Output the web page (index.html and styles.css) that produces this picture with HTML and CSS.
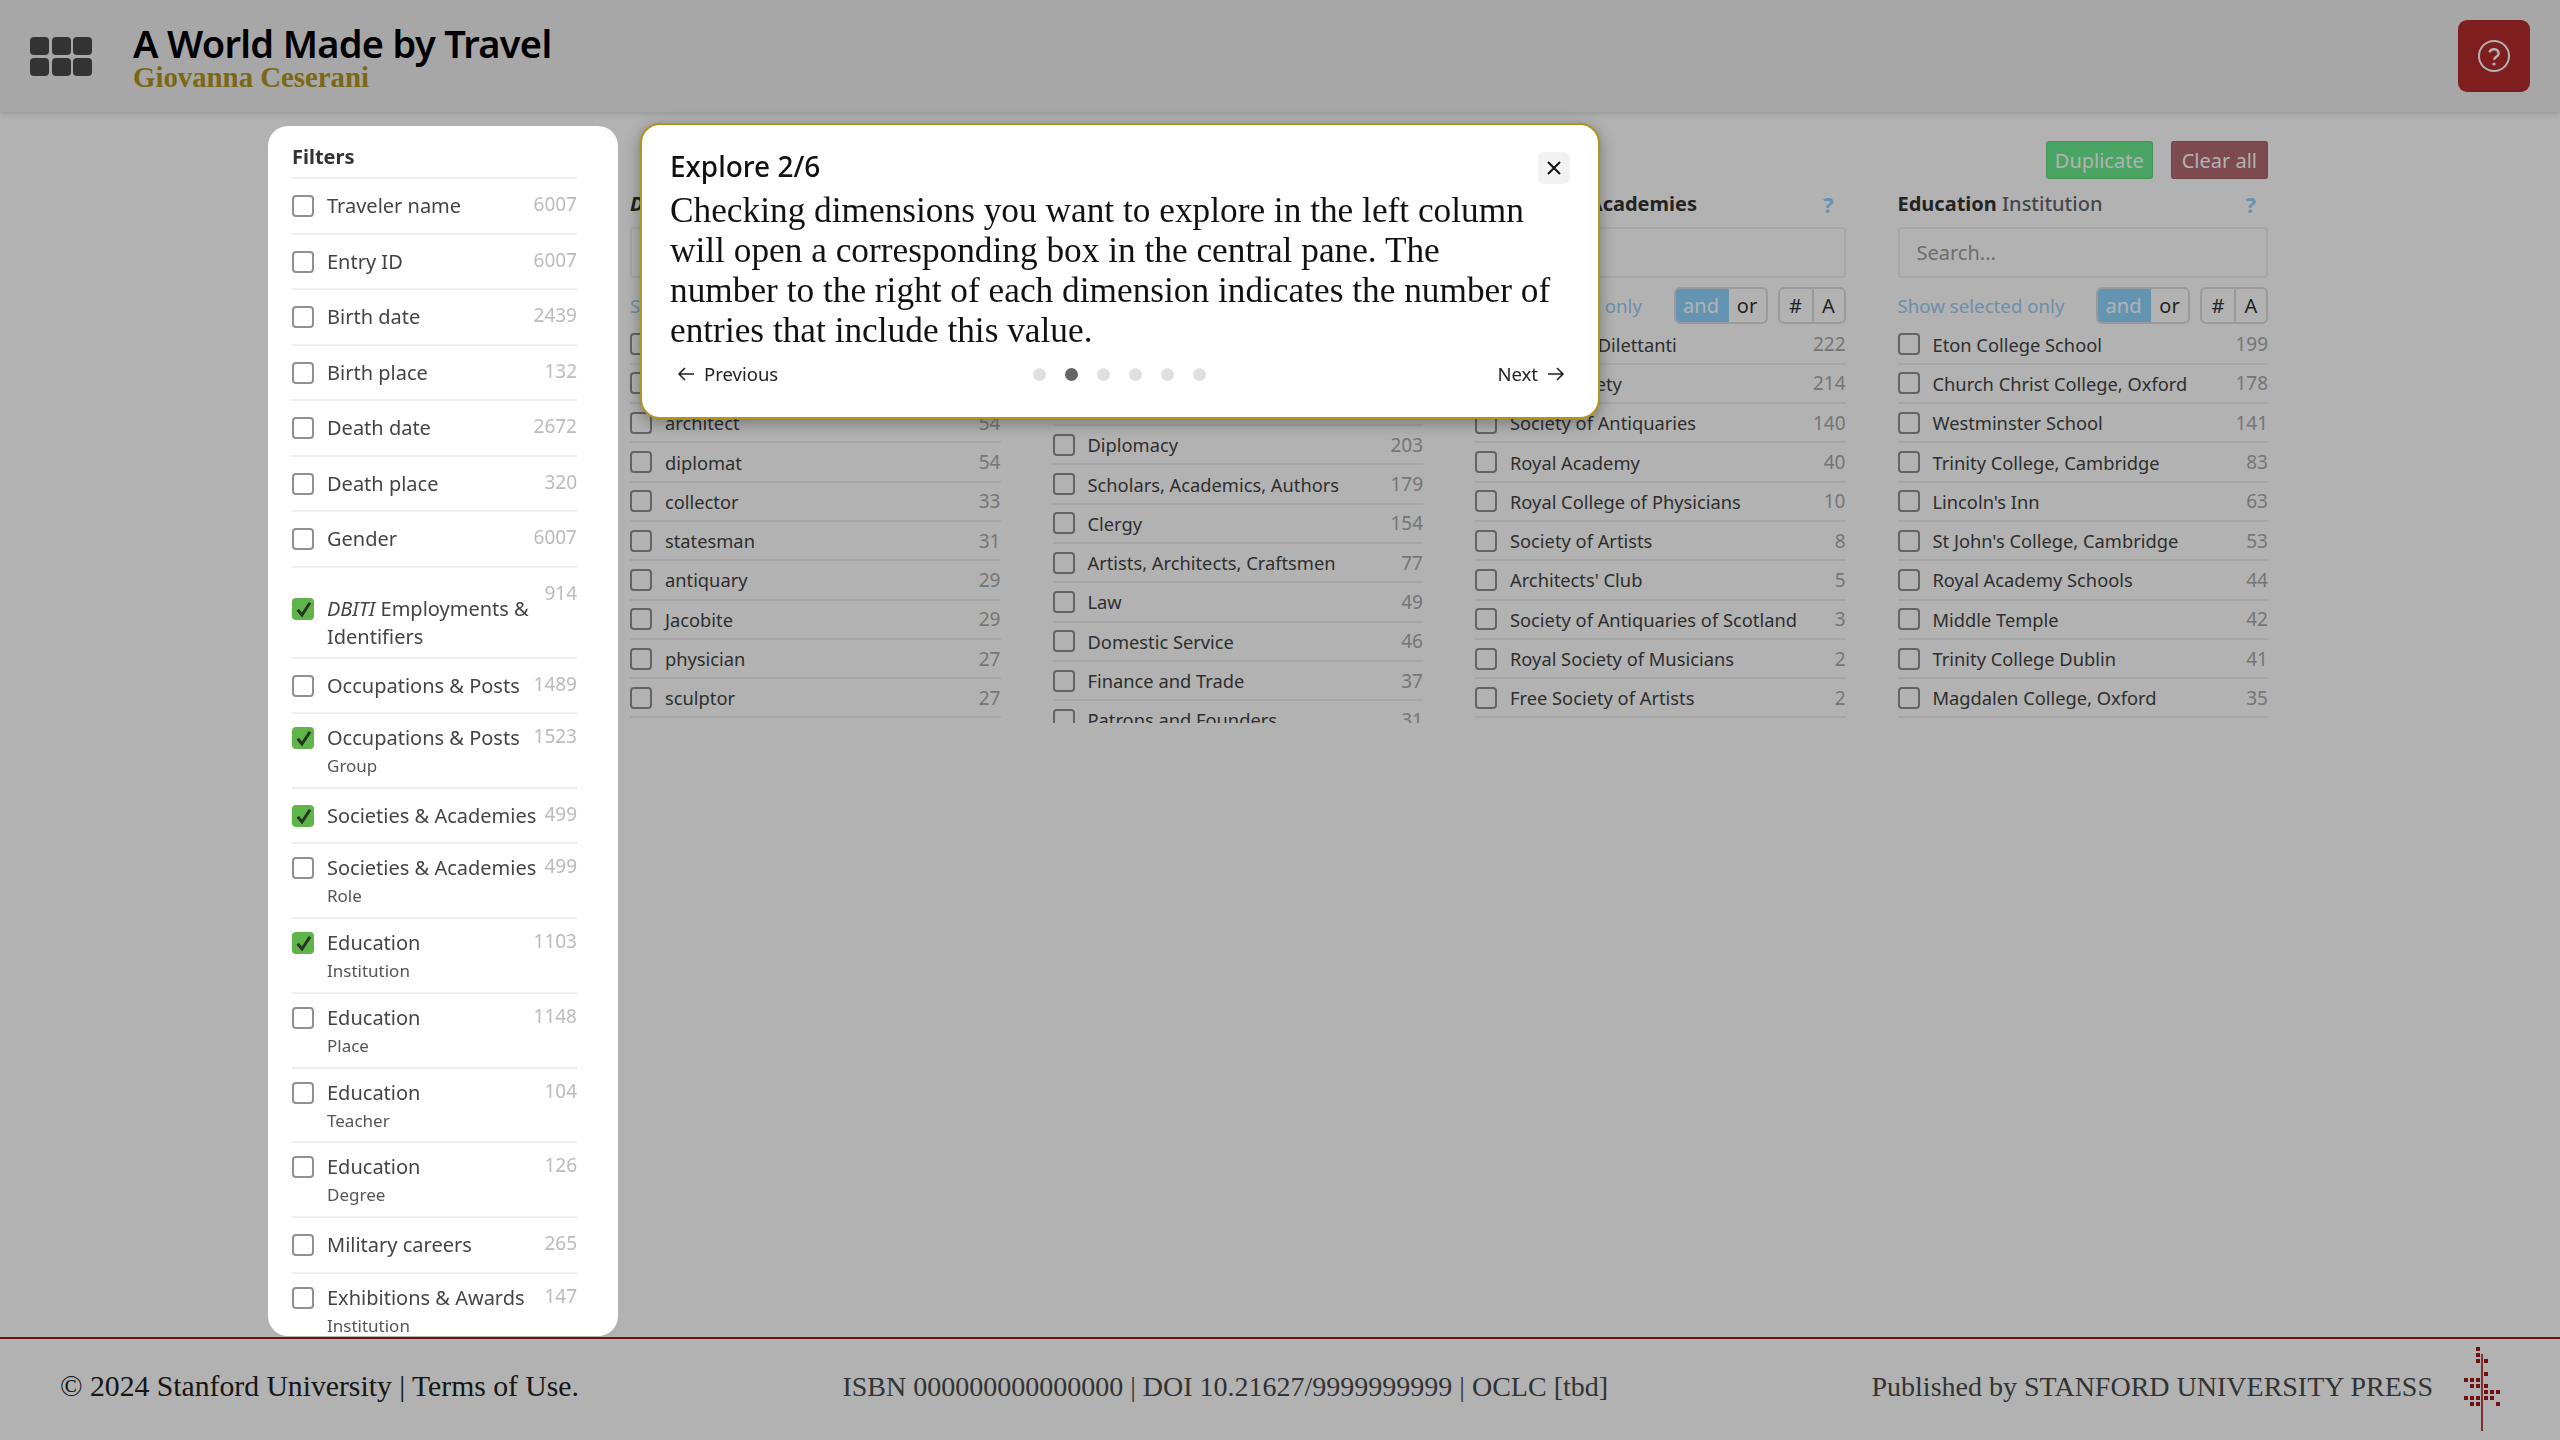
FILE: index.html
```html
<!DOCTYPE html>
<html lang="en">

<head>
  <meta charset="UTF-8">
  <meta name="viewport" content="width=device-width, initial-scale=1.0">
  <title>A World Made by Travel</title>
  <link rel="stylesheet" href="styles.css">
</head>

<body>
  <!-- Top bar -->
  <header class="topbar">
    <div class="grid-icon">
      <span></span><span></span><span></span>
      <span></span><span></span><span></span>
    </div>
    <div class="brand">
      <h1>A World Made by Travel</h1>
      <p>Giovanna Ceserani</p>
    </div>
    <button class="help-btn" type="button">
      <svg width="34" height="34" viewBox="0 0 34 34" fill="none" stroke="#fff" stroke-width="2">
        <circle cx="17" cy="17" r="15"/>
        <path d="M12.4 13.4a4.8 4.8 0 0 1 9.3 1.2c0 3-4.6 3.4-4.6 6.2" stroke-width="2.4"/>
        <circle cx="17" cy="25" r="1.6" fill="#fff" stroke="none"/>
      </svg>
    </button>
  </header>

  <main class="main">
    <!-- Filters -->
    <aside class="filters">
      <h2>Filters</h2>
      <div class="filter"><span class="box"></span><div class="filter-text">Traveler name</div><span class="count">6007</span></div>
      <div class="filter"><span class="box"></span><div class="filter-text">Entry ID</div><span class="count">6007</span></div>
      <div class="filter"><span class="box"></span><div class="filter-text">Birth date</div><span class="count">2439</span></div>
      <div class="filter"><span class="box"></span><div class="filter-text">Birth place</div><span class="count">132</span></div>
      <div class="filter"><span class="box"></span><div class="filter-text">Death date</div><span class="count">2672</span></div>
      <div class="filter"><span class="box"></span><div class="filter-text">Death place</div><span class="count">320</span></div>
      <div class="filter"><span class="box"></span><div class="filter-text">Gender</div><span class="count">6007</span></div>
      <div class="filter tall">
        <span class="box checked"><svg width="22" height="22" viewBox="0 0 22 22"><path d="M5.7 11.7L10 17L18 4.8"/></svg></span>
        <div class="filter-text"><em>DBITI</em> Employments &amp; Identifiers</div><span class="count">914</span>
      </div>
      <div class="filter"><span class="box"></span><div class="filter-text">Occupations &amp; Posts</div><span class="count">1489</span></div>
      <div class="filter double">
        <span class="box checked"><svg width="22" height="22" viewBox="0 0 22 22"><path d="M5.7 11.7L10 17L18 4.8"/></svg></span>
        <div class="filter-text">Occupations &amp; Posts<small>Group</small></div><span class="count">1523</span>
      </div>
      <div class="filter">
        <span class="box checked"><svg width="22" height="22" viewBox="0 0 22 22"><path d="M5.7 11.7L10 17L18 4.8"/></svg></span>
        <div class="filter-text">Societies &amp; Academies</div><span class="count">499</span>
      </div>
      <div class="filter double"><span class="box"></span><div class="filter-text">Societies &amp; Academies<small>Role</small></div><span class="count">499</span></div>
      <div class="filter double">
        <span class="box checked"><svg width="22" height="22" viewBox="0 0 22 22"><path d="M5.7 11.7L10 17L18 4.8"/></svg></span>
        <div class="filter-text">Education<small>Institution</small></div><span class="count">1103</span>
      </div>
      <div class="filter double"><span class="box"></span><div class="filter-text">Education<small>Place</small></div><span class="count">1148</span></div>
      <div class="filter double"><span class="box"></span><div class="filter-text">Education<small>Teacher</small></div><span class="count">104</span></div>
      <div class="filter double"><span class="box"></span><div class="filter-text">Education<small>Degree</small></div><span class="count">126</span></div>
      <div class="filter"><span class="box"></span><div class="filter-text">Military careers</div><span class="count">265</span></div>
      <div class="filter double"><span class="box"></span><div class="filter-text">Exhibitions &amp; Awards<small>Institution</small></div><span class="count">147</span></div>
    </aside>

    <!-- Selected dimensions -->
    <section class="content">
      <div class="actions">
        <button class="btn btn-green" type="button">Duplicate</button>
        <button class="btn btn-red" type="button">Clear all</button>
      </div>

      <div class="columns">
        <div class="column">
          <div class="col-title"><span><b><i>DBITI</i> Employments</b></span><span class="qmark">?</span></div>
          <div class="search">Search...</div>
          <div class="controls">
            <span class="show-selected">Show selected only</span>
            <div class="toggle"><span class="on">and</span><span class="off">or</span></div>
            <div class="toggle"><span class="sq">#</span><span class="sq">A</span></div>
          </div>
          <ul class="list">
            <li><span class="box"></span><span class="name">politician</span><span class="num">96</span></li>
            <li><span class="box"></span><span class="name">writer</span><span class="num">71</span></li>
            <li><span class="box"></span><span class="name">architect</span><span class="num">54</span></li>
            <li><span class="box"></span><span class="name">diplomat</span><span class="num">54</span></li>
            <li><span class="box"></span><span class="name">collector</span><span class="num">33</span></li>
            <li><span class="box"></span><span class="name">statesman</span><span class="num">31</span></li>
            <li><span class="box"></span><span class="name">antiquary</span><span class="num">29</span></li>
            <li><span class="box"></span><span class="name">Jacobite</span><span class="num">29</span></li>
            <li><span class="box"></span><span class="name">physician</span><span class="num">27</span></li>
            <li><span class="box"></span><span class="name">sculptor</span><span class="num">27</span></li>
          </ul>
        </div>

        <div class="column">
          <div class="col-title two-line"><span><b>Occupations &amp; Posts</b> Group</span><span class="qmark">?</span></div>
          <div class="search">Search...</div>
          <div class="controls">
            <span class="show-selected">Show selected only</span>
            <div class="toggle"><span class="on">and</span><span class="off">or</span></div>
            <div class="toggle"><span class="sq">#</span><span class="sq">A</span></div>
          </div>
          <ul class="list">
            <li><span class="box"></span><span class="name">Military</span><span class="num">412</span></li>
            <li><span class="box"></span><span class="name">Politics</span><span class="num">388</span></li>
            <li><span class="box"></span><span class="name">Diplomacy</span><span class="num">203</span></li>
            <li><span class="box"></span><span class="name">Scholars, Academics, Authors</span><span class="num">179</span></li>
            <li><span class="box"></span><span class="name">Clergy</span><span class="num">154</span></li>
            <li><span class="box"></span><span class="name">Artists, Architects, Craftsmen</span><span class="num">77</span></li>
            <li><span class="box"></span><span class="name">Law</span><span class="num">49</span></li>
            <li><span class="box"></span><span class="name">Domestic Service</span><span class="num">46</span></li>
            <li><span class="box"></span><span class="name">Finance and Trade</span><span class="num">37</span></li>
            <li><span class="box"></span><span class="name">Patrons and Founders</span><span class="num">31</span></li>
          </ul>
        </div>

        <div class="column">
          <div class="col-title"><span><b>Societies &amp; Academies</b></span><span class="qmark">?</span></div>
          <div class="search">Search...</div>
          <div class="controls">
            <span class="show-selected">Show selected only</span>
            <div class="toggle"><span class="on">and</span><span class="off">or</span></div>
            <div class="toggle"><span class="sq">#</span><span class="sq">A</span></div>
          </div>
          <ul class="list">
            <li><span class="box"></span><span class="name">Society of Dilettanti</span><span class="num">222</span></li>
            <li><span class="box"></span><span class="name">Royal Society</span><span class="num">214</span></li>
            <li><span class="box"></span><span class="name">Society of Antiquaries</span><span class="num">140</span></li>
            <li><span class="box"></span><span class="name">Royal Academy</span><span class="num">40</span></li>
            <li><span class="box"></span><span class="name">Royal College of Physicians</span><span class="num">10</span></li>
            <li><span class="box"></span><span class="name">Society of Artists</span><span class="num">8</span></li>
            <li><span class="box"></span><span class="name">Architects' Club</span><span class="num">5</span></li>
            <li><span class="box"></span><span class="name">Society of Antiquaries of Scotland</span><span class="num">3</span></li>
            <li><span class="box"></span><span class="name">Royal Society of Musicians</span><span class="num">2</span></li>
            <li><span class="box"></span><span class="name">Free Society of Artists</span><span class="num">2</span></li>
          </ul>
        </div>

        <div class="column">
          <div class="col-title"><span><b>Education</b> Institution</span><span class="qmark">?</span></div>
          <div class="search">Search...</div>
          <div class="controls">
            <span class="show-selected">Show selected only</span>
            <div class="toggle"><span class="on">and</span><span class="off">or</span></div>
            <div class="toggle"><span class="sq">#</span><span class="sq">A</span></div>
          </div>
          <ul class="list">
            <li><span class="box"></span><span class="name">Eton College School</span><span class="num">199</span></li>
            <li><span class="box"></span><span class="name">Church Christ College, Oxford</span><span class="num">178</span></li>
            <li><span class="box"></span><span class="name">Westminster School</span><span class="num">141</span></li>
            <li><span class="box"></span><span class="name">Trinity College, Cambridge</span><span class="num">83</span></li>
            <li><span class="box"></span><span class="name">Lincoln's Inn</span><span class="num">63</span></li>
            <li><span class="box"></span><span class="name">St John's College, Cambridge</span><span class="num">53</span></li>
            <li><span class="box"></span><span class="name">Royal Academy Schools</span><span class="num">44</span></li>
            <li><span class="box"></span><span class="name">Middle Temple</span><span class="num">42</span></li>
            <li><span class="box"></span><span class="name">Trinity College Dublin</span><span class="num">41</span></li>
            <li><span class="box"></span><span class="name">Magdalen College, Oxford</span><span class="num">35</span></li>
          </ul>
        </div>
      </div>
    </section>
  </main>

  <footer class="footer">
    <div class="footer-left">© 2024 Stanford University | Terms of Use.</div>
    <div class="footer-mid">ISBN 000000000000000 | DOI 10.21627/9999999999 | OCLC [tbd]</div>
    <div class="footer-right">
      <span>Published by STANFORD UNIVERSITY PRESS</span>
      <svg class="press-logo" width="40" height="86" viewBox="0 0 40 86" fill="#9e1717">
        <rect x="21.2" y="9" width="1.6" height="77"/>
        <rect x="16" y="2" width="4" height="4"/>
        <rect x="16" y="8" width="4" height="4"/>
        <rect x="16" y="14" width="4" height="4"/><rect x="24" y="14" width="4" height="4"/>
        <rect x="24" y="27" width="4" height="4"/>
        <rect x="4" y="33" width="4" height="4"/><rect x="10" y="33" width="4" height="4"/><rect x="16" y="33" width="4" height="4"/>
        <rect x="10" y="39" width="4" height="4"/><rect x="16" y="39" width="4" height="4"/><rect x="24" y="39" width="4" height="4"/>
        <rect x="24" y="45" width="4" height="4"/><rect x="30" y="45" width="4" height="4"/><rect x="36" y="45" width="4" height="4"/>
        <rect x="4" y="51" width="4" height="4"/><rect x="10" y="51" width="4" height="4"/><rect x="16" y="51" width="4" height="4"/><rect x="24" y="51" width="4" height="4"/><rect x="30" y="51" width="4" height="4"/>
        <rect x="10" y="57" width="4" height="4"/><rect x="16" y="57" width="4" height="4"/><rect x="36" y="57" width="4" height="4"/>
      </svg>
    </div>
  </footer>

  <!-- Tour overlay -->
  <div class="overlay"></div>
  <div class="tour">
    <div class="tour-head">
      <h3>Explore 2/6</h3>
      <button class="tour-close" type="button">
        <svg width="14" height="14" viewBox="0 0 14 14" stroke="#111" stroke-width="2"><path d="M1 1L13 13M13 1L1 13"/></svg>
      </button>
    </div>
    <p>Checking dimensions you want to explore in the left column<br>
      will open a corresponding box in the central pane. The<br>
      number to the right of each dimension indicates the number of<br>
      entries that include this value.</p>
    <div class="tour-nav">
      <span class="tour-link">
        <svg width="18" height="16" viewBox="0 0 18 16" fill="none" stroke="#222" stroke-width="1.6"><path d="M17 8H2M8 2L2 8L8 14"/></svg>
        Previous
      </span>
      <div class="dots"><i></i><i class="current"></i><i></i><i></i><i></i><i></i></div>
      <span class="tour-link">
        Next
        <svg width="18" height="16" viewBox="0 0 18 16" fill="none" stroke="#222" stroke-width="1.6"><path d="M1 8H16M10 2L16 8L10 14"/></svg>
      </span>
    </div>
  </div>
</body>

</html>
```

FILE: styles.css
```css
/* Reset */
html,
body {
  margin: 0;
  padding: 0;
}

body {
  display: flex;
  flex-direction: column;
  height: 100vh;
  overflow: hidden;
  background-color: #fff;
  color: #333;
  font-family: "Noto Sans", Arial, sans-serif;
}

/* Top bar */
.topbar {
  display: flex;
  align-items: center;
  height: 112px;
  flex-shrink: 0;
  padding: 0 30px;
  box-sizing: border-box;
  background-color: #f0f0f0;
  box-shadow: 0 2px 5px rgba(0, 0, 0, 0.15);
}

.grid-icon {
  display: grid;
  grid-template-columns: repeat(3, 19px);
  grid-template-rows: repeat(2, 18px);
  gap: 3px 2.5px;
}

.grid-icon span {
  background-color: #4a4a4a;
  border-radius: 4px;
}

.brand {
  margin-left: 41px;
  flex: 1;
}

.brand h1 {
  margin: 1px 0 0;
  font-size: 38px;
  line-height: 42px;
  font-weight: 600;
  letter-spacing: -0.7px;
  color: #000;
}

.brand p {
  margin: -2px 0 0;
  font-family: "Liberation Serif", serif;
  font-size: 28.8px;
  line-height: 30px;
  font-weight: 700;
  color: #b1951d;
}

.help-btn {
  width: 72px;
  height: 72px;
  display: flex;
  align-items: center;
  justify-content: center;
  padding: 0;
  border: none;
  border-radius: 9px;
  background-color: #b62b2b;
}

/* Main area */
.main {
  flex: 1;
  display: flex;
  min-height: 0;
}

.filters {
  position: relative;
  z-index: 20;
  width: 350px;
  margin: 14px 0 1px 268px;
  padding: 0 41px 0 24px;
  box-sizing: border-box;
  overflow: hidden;
  background-color: #fff;
  border-radius: 20px;
}

.filters h2 {
  margin: 0;
  height: 53px;
  box-sizing: border-box;
  padding-top: 17px;
  border-bottom: 2px solid #eee;
  font-size: 20px;
  line-height: 28px;
  font-weight: 700;
}

.filter {
  display: flex;
  align-items: flex-start;
  padding: 13px 0 12.5px;
  border-bottom: 2px solid #eee;
}

.filter.double {
  padding: 10px 0 6.8px;
}

.filter.tall {
  padding: 27px 0 6px;
}

.box {
  flex-shrink: 0;
  width: 22px;
  height: 22px;
  margin-top: 3px;
  box-sizing: border-box;
  border: 2px solid #909090;
  border-radius: 4px;
  background-color: #fff;
}

.box.checked {
  border: none;
  background-color: #5fb54a;
}

.box.checked svg {
  display: block;
  fill: none;
  stroke: #26351f;
  stroke-width: 3;
}

.filter-text {
  flex: 1;
  margin-left: 13px;
  font-size: 20px;
  line-height: 28px;
  color: #444;
}

.filter-text small {
  display: block;
  font-size: 17px;
  line-height: 28px;
  color: #555;
}

.count {
  font-size: 19px;
  line-height: 24px;
  color: #bbb;
}

.filter.tall .count {
  margin-top: -14px;
}

/* Dimension columns */
.content {
  width: 1638px;
  margin-left: 12px;
  padding-top: 29px;
}

.actions {
  display: flex;
  justify-content: flex-end;
  gap: 18px;
  margin-bottom: 11px;
}

.btn {
  height: 38px;
  padding: 0 10px;
  border: 1px solid rgba(0, 0, 0, 0.1);
  border-radius: 3px;
  font-family: inherit;
  font-size: 20px;
  color: #fff;
}

.btn-green {
  padding: 0 8px;
  background-color: #6beb8f;
}

.btn-red {
  background-color: #b26b72;
}

.columns {
  display: flex;
  gap: 52px;
  height: 533px;
}

.column {
  width: 371px;
  display: flex;
  flex-direction: column;
  min-height: 0;
}

.col-title {
  display: flex;
  justify-content: space-between;
  height: 28px;
  font-size: 20px;
  line-height: 28px;
  font-weight: 500;
  color: #666;
}

.col-title.two-line {
  height: 50px;
}

.col-title b {
  font-weight: 700;
  color: #333;
}

.qmark {
  margin-right: 12px;
  font-size: 22px;
  font-weight: 700;
  color: #8fd5ff;
}

.search {
  height: 51px;
  margin-top: 9px;
  padding-left: 17px;
  box-sizing: border-box;
  border: 2px solid #eee;
  border-radius: 4px;
  font-size: 20px;
  line-height: 47px;
  color: #9c9c9c;
}

.controls {
  display: flex;
  align-items: center;
  height: 37px;
  margin-top: 9px;
  flex-shrink: 0;
}

.show-selected {
  flex: 1;
  font-size: 18.7px;
  color: #9ccdef;
  white-space: nowrap;
}

.toggle {
  display: flex;
  height: 37px;
  margin-left: 10px;
  box-sizing: border-box;
  border: 2px solid #ddd;
  border-radius: 6px;
  overflow: hidden;
  font-size: 20px;
  line-height: 33px;
  text-align: center;
  color: #333;
}

.toggle .on {
  width: 55px;
  margin: -2px 0 -2px -2px;
  padding-top: 2px;
  background-color: #8fd5ff;
  color: #fff;
}

.toggle .off {
  width: 37px;
}

.toggle .sq {
  width: 32px;
  box-sizing: border-box;
}

.toggle .sq + .sq {
  border-left: 2px solid #ddd;
}

.list {
  flex: 1;
  min-height: 0;
  margin: 1.5px 0 0;
  padding: 0;
  overflow: hidden;
  list-style: none;
}

.list li {
  display: flex;
  align-items: center;
  height: 39.3px;
  box-sizing: border-box;
  border-bottom: 2px solid #eee;
}

.list .box {
  margin-top: 0;
}

.name {
  flex: 1;
  margin-left: 13px;
  font-size: 18.3px;
  color: #444;
  white-space: nowrap;
}

.num {
  font-size: 19px;
  color: #aaa;
}

/* Footer */
.footer {
  display: flex;
  align-items: center;
  justify-content: space-between;
  height: 103px;
  flex-shrink: 0;
  padding: 0 60px 6px 60px;
  box-sizing: border-box;
  border-top: 2px solid #9e1717;
  font-family: "Liberation Serif", serif;
  font-size: 28px;
}

.footer-left {
  font-size: 29.7px;
  color: #222;
}

.footer-mid,
.footer-right {
  color: #4a4a4a;
}

.footer-right {
  display: flex;
  align-items: center;
  gap: 27px;
}

.press-logo {
  margin-top: 2px;
}

/* Tour */
.overlay {
  position: fixed;
  inset: 0;
  z-index: 10;
  background-color: rgba(0, 0, 0, 0.3);
}

.tour {
  position: fixed;
  z-index: 30;
  left: 640px;
  top: 123px;
  width: 960px;
  height: 296px;
  box-sizing: border-box;
  padding: 25px 28px 0;
  border: 2px solid #b1951d;
  border-radius: 20px;
  background-color: #fff;
  box-shadow: 0 4px 16px rgba(0, 0, 0, 0.35);
}

.tour-head {
  display: flex;
  justify-content: space-between;
  align-items: center;
  height: 32px;
}

.tour-head h3 {
  margin: 0;
  font-size: 28px;
  line-height: 32px;
  font-weight: 500;
  color: #111;
}

.tour-close {
  display: flex;
  align-items: center;
  justify-content: center;
  width: 32px;
  height: 32px;
  margin-top: 3px;
  padding: 0;
  border: none;
  border-radius: 6px;
  background-color: #f2f2f2;
}

.tour p {
  margin: 9px 0 0;
  font-family: "Liberation Serif", serif;
  font-size: 35.3px;
  line-height: 40px;
  white-space: nowrap;
  color: #111;
}

.tour-nav {
  display: flex;
  align-items: center;
  justify-content: space-between;
  margin: 9px 5px 0 7px;
}

.tour-link {
  display: flex;
  align-items: center;
  gap: 9px;
  font-size: 18.5px;
  line-height: 28px;
  color: #222;
}

.dots {
  display: flex;
  gap: 19px;
  margin-right: 37px;
}

.dots i {
  width: 13px;
  height: 13px;
  border-radius: 50%;
  background-color: #e0e0e0;
}

.dots i.current {
  background-color: #666;
}
```
